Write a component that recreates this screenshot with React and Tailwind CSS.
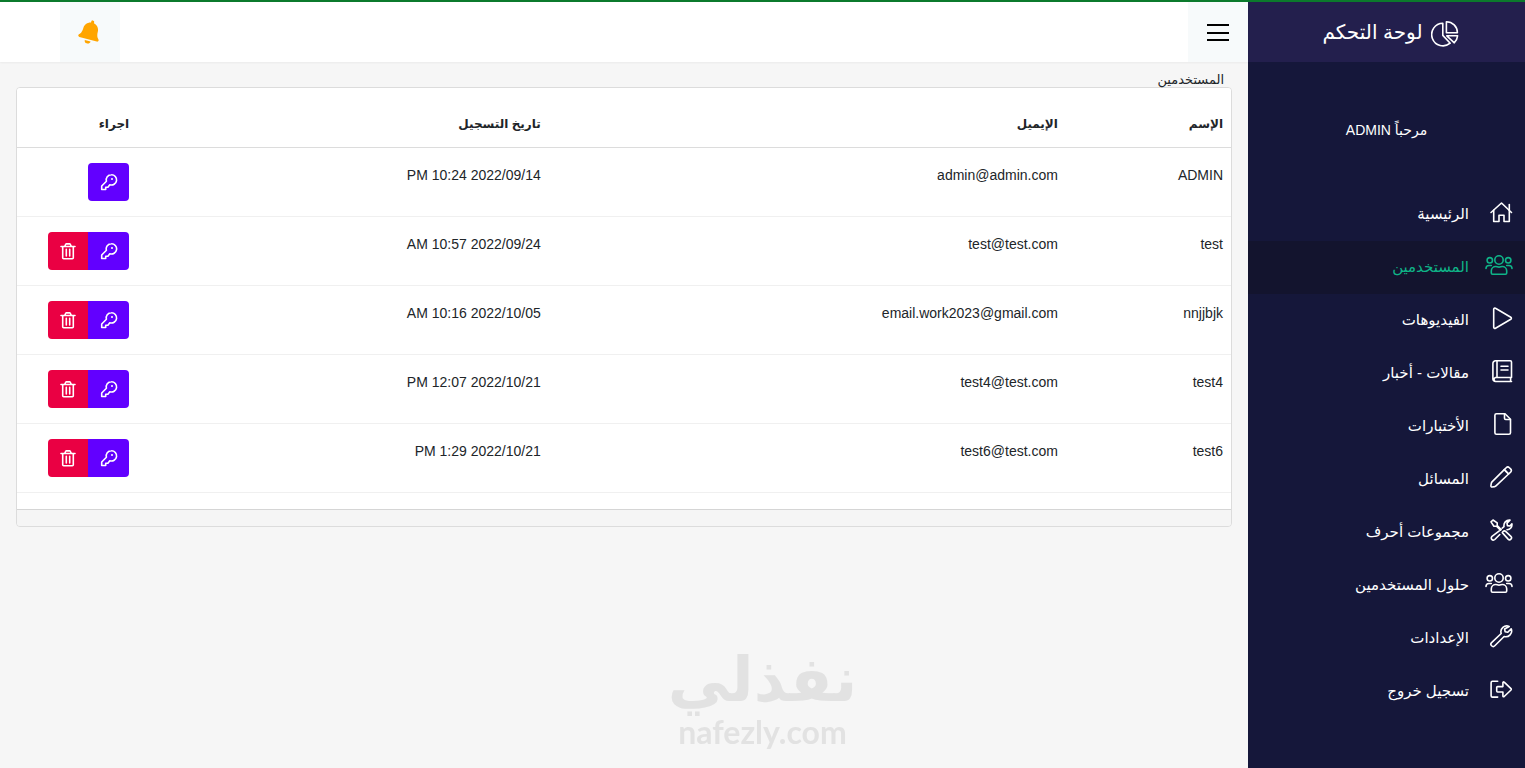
import React, { useState } from 'react';
import { FaBell } from 'react-icons/fa';

const Icon = ({ className = 'size-6', viewBox = '0 0 24 24', children }) => (
    <svg
        className={className}
        viewBox={viewBox}
        fill="none"
        stroke="currentColor"
        strokeWidth="1.6"
        strokeLinecap="round"
        strokeLinejoin="round"
        aria-hidden="true"
    >
        {children}
    </svg>
);

const ChartIcon = () => (
    <Icon className="mt-1 size-7" viewBox="0 0 28 28">
        <path d="M11.800 3.200a11.300 11.300 0 1 0 7.400 20l-7.400-7.800z" />
        <path d="M15.400 1.700v11h11a11 11 0 0 0-11-11z" />
        <path d="M15.800 15.800h10.800a11 11 0 0 1-3.300 7z" />
    </Icon>
);

const HomeIcon = () => (
    <Icon>
        <path d="M2 12.500 12.500 3l10 9.500" />
        <path d="M4.700 10.300v11.200h5.300v-6.200h5v6.200h5.300V10.300" />
        <path d="M20.300 10V4.500" />
    </Icon>
);

const UsersIcon = () => (
    <Icon className="h-6 w-7" viewBox="0 0 28 24">
        <circle cx="14" cy="7" r="4.200" />
        <circle cx="4.800" cy="7.300" r="2.700" />
        <circle cx="23.200" cy="7.300" r="2.700" />
        <path d="M6.300 20v-2.300a4.400 4.400 0 0 1 4.400-4.200c1.300 0 1.800.600 3.300.600s2-.600 3.300-.600a4.400 4.400 0 0 1 4.400 4.200V20c0 .700-.500 1.200-1.200 1.200h-13c-.700 0-1.200-.500-1.200-1.200z" />
        <path d="M1 15.500c0-2 1.200-3 3-3h2.300M27 15.500c0-2-1.200-3-3-3h-2.300" />
    </Icon>
);

const PlayIcon = () => (
    <Icon>
        <path d="M4.700 3.300v17.900c0 1 1 1.500 1.800 1l15.300-9c.8-.5.8-1.500 0-2L6.500 2.300c-.8-.5-1.800 0-1.800 1z" />
    </Icon>
);

const BookIcon = () => (
    <Icon>
        <path d="M22.500 18.500V3c0-.700-.500-1.200-1.200-1.200H6.500A2.600 2.600 0 0 0 3.900 4.400v15.500a2.600 2.600 0 0 0 2.600 2.600h16M21.600 22.400v-3.800M22.500 18.500h-16A2.100 2.100 0 0 0 6.500 22.500M8 1.900v16.500" />
        <path d="M12 7.300h7M12 11h7" />
    </Icon>
);

const FileIcon = () => (
    <Icon>
        <path d="M16 1.700H7.500c-.900 0-1.600.700-1.600 1.600v17.400c0 .900.700 1.600 1.600 1.600h12.400c.900 0 1.600-.700 1.600-1.600V7.200z" />
        <path d="M15.500 1.900v4.400c0 .700.500 1.200 1.200 1.200h4.600" />
    </Icon>
);

const PencilIcon = () => (
    <Icon>
        <path d="M15.300 4.600 3 16.900c-.4.400-.6.900-.7 1.400l-.4 2.400c-.1.900.5 1.400 1.300 1.300l2.400-.4c.5-.1 1-.3 1.400-.7L19.600 9z" />
        <path d="m15.300 4.600 1.900-1.900a2.300 2.300 0 0 1 3.200 0l1.200 1.200a2.300 2.300 0 0 1 0 3.200L19.600 9z" />
    </Icon>
);

const ToolsIcon = () => (
    <Icon>
        <path d="M2 3.900 4 2l4.200 2.900v2.600l4 4M2 3.900l2.900 4.300h2.600l4 4" />
        <path d="m13.300 14.600 5.800 6.500a2 2 0 0 0 2.800 0 2 2 0 0 0 0-2.800l-5-4.700c-1-.9-2.100-.8-2.900-.1-.7.700-.9.900-.7 1.100z" />
        <path d="M10.300 12.900 3 18.400a2.100 2.100 0 0 0-.2 3 2.100 2.100 0 0 0 3 .1l5-5" />
        <path d="m13.200 10.200 1.800-1.500c-.6-3.700 2-6.900 6-6.600l-3 3 .4 2.500 2.500.4 2-2.200c.5 3.400-1.800 6.100-4.900 6" />
    </Icon>
);

const WrenchIcon = () => (
    <Icon>
        <path d="M20.200 2.500a5.800 5.800 0 0 0-8 7L2.600 18.600a2.200 2.200 0 0 0 3.200 3.200l9.300-9.300a5.800 5.800 0 0 0 7.100-7.700l-3.400 3.400-2.700-.5-.5-2.700z" />
    </Icon>
);

const LogoutIcon = () => (
    <Icon>
        <path d="M8.700 4.300H3.500c-.800 0-1.400.600-1.400 1.400v13c0 .800.600 1.400 1.400 1.400h5.200" />
        <path d="M13.900 5.600v4H8.600c-.500 0-.900.400-.900.900v3.600c0 .500.400.900.900.900h5.300v4c0 .700.800 1 1.300.500l6.800-6.500c.4-.4.400-1 0-1.400l-6.800-6.500c-.5-.500-1.300-.2-1.300.5z" />
    </Icon>
);

const KeyIcon = () => (
    <Icon className="size-[18px]" viewBox="0 0 18 18">
        <path d="M11.300 1.800a5.100 5.100 0 0 0-4.900 6.500L1.700 13v3.500h4v-2.200h2.200l1.900-2.600a5.100 5.100 0 1 0 1.500-9.900z" />
        <circle cx="12" cy="6" r="1" fill="currentColor" stroke="none" />
    </Icon>
);

const TrashIcon = () => (
    <Icon className="size-[18px]" viewBox="0 0 18 18">
        <path d="M2 4.500h14M3.700 4.700v11c0 .600.400 1 1 1h8.600c.6 0 1-.4 1-1v-11M5.700 4.300l.9-1.800c.2-.4.500-.6.900-.6h3c.4 0 .7.200.9.600l.9 1.800M7.300 7.300v6.600M10.700 7.300v6.600" />
    </Icon>
);

const menuItems = [
    { label: 'الرئيسية', icon: HomeIcon },
    { label: 'المستخدمين', icon: UsersIcon, active: true },
    { label: 'الفيديوهات', icon: PlayIcon },
    { label: 'مقالات - أخبار', icon: BookIcon },
    { label: 'الأختبارات', icon: FileIcon },
    { label: 'المسائل', icon: PencilIcon },
    { label: 'مجموعات أحرف', icon: ToolsIcon },
    { label: 'حلول المستخدمين', icon: UsersIcon },
    { label: 'الإعدادات', icon: WrenchIcon },
    { label: 'تسجيل خروج', icon: LogoutIcon },
];

const initialUsers = [
    { name: 'ADMIN', email: 'admin@admin.com', date: '2022/09/14 10:24 PM', isAdmin: true },
    { name: 'test', email: 'test@test.com', date: '2022/09/24 10:57 AM' },
    { name: 'nnjjbjk', email: 'email.work2023@gmail.com', date: '2022/10/05 10:16 AM' },
    { name: 'test4', email: 'test4@test.com', date: '2022/10/21 12:07 PM' },
    { name: 'test6', email: 'test6@test.com', date: '2022/10/21 1:29 PM' },
];

const Sidebar = () => (
    <aside className="w-[277px] shrink-0 bg-[#15173a] text-white">
        <div className="flex h-15 items-center justify-center gap-2 bg-[#231f4d] pl-2 text-xl">
            <ChartIcon />
            <span>لوحة التحكم</span>
        </div>
        <p className="pt-14 pb-[46px] text-center text-sm leading-6">مرحباً ADMIN</p>
        <nav>
            {menuItems.map(({ label, icon: ItemIcon, active }) => (
                <a
                    key={label}
                    href="#"
                    className={`flex h-[53px] items-center gap-4 pr-3 text-[15px] ${
                        active ? 'bg-[#13142e] text-[#0fb488]' : 'text-white'
                    }`}
                >
                    <span className="flex w-7 justify-start pb-1.5">
                        <ItemIcon />
                    </span>
                    <span>{label}</span>
                </a>
            ))}
        </nav>
    </aside>
);

const Topbar = ({ onToggle }) => (
    <header className="flex h-15 items-stretch justify-between bg-white pl-15 shadow-xs">
        <button
            type="button"
            aria-label="القائمة"
            onClick={onToggle}
            className="flex w-15 items-center justify-center bg-[#f7fafb] text-black"
        >
            <svg className="size-6" viewBox="0 0 24 24" stroke="currentColor" strokeWidth="2" aria-hidden="true">
                <path d="M1 5h22M1 13h22M1 20h22" />
            </svg>
        </button>
        <button
            type="button"
            aria-label="الإشعارات"
            className="flex w-15 items-center justify-center bg-[#f7fafb] text-[#ffa500]"
        >
            <FaBell className="size-6 rotate-15" />
        </button>
    </header>
);

const UsersTable = ({ users, onDelete }) => (
    <table className="w-full table-fixed text-sm text-[#212529]">
        <thead>
            <tr className="border-b border-[#dcdcdc] text-right text-xs">
                <th className="w-[13.6%] px-2 pt-2 pb-[11px] leading-6">الإسم</th>
                <th className="w-[42.6%] px-2 pt-2 pb-[11px] leading-6">الإيميل</th>
                <th className="w-[33.9%] px-2 pt-2 pb-[11px] leading-6">تاريخ التسجيل</th>
                <th className="w-[9.9%] px-2 pt-2 pb-[11px] leading-6">اجراء</th>
            </tr>
        </thead>
        <tbody>
            {users.map((user) => (
                <tr key={user.email} className="border-b border-[#f0f0f0] align-top leading-6">
                    <td className="px-2 py-[15px]">{user.name}</td>
                    <td className="px-2 py-[15px]">{user.email}</td>
                    <td className="px-2 py-[15px]">{user.date}</td>
                    <td className="px-2 py-[15px]">
                        <div className="flex w-max overflow-hidden rounded-sm text-white">
                            <button
                                type="button"
                                aria-label="تغيير كلمة المرور"
                                className="flex h-[38px] w-[41px] items-center justify-center bg-[#6200ff]"
                            >
                                <KeyIcon />
                            </button>
                            {!user.isAdmin && (
                                <button
                                    type="button"
                                    aria-label="حذف"
                                    onClick={() => onDelete(user.email)}
                                    className="flex h-[38px] w-10 items-center justify-center bg-[#ea0043]"
                                >
                                    <TrashIcon />
                                </button>
                            )}
                        </div>
                    </td>
                </tr>
            ))}
        </tbody>
    </table>
);

const Watermark = () => (
    <div
        aria-hidden="true"
        className="pointer-events-none fixed bottom-5 left-1/2 flex -translate-x-1/2 flex-col items-center font-bold text-[#e2e2e2]"
    >
        <span className="text-[62px] leading-[72px]">نفذلي</span>
        <span className="font-['Lato'] text-[32px] leading-8">nafezly.com</span>
    </div>
);

const App = () => {
    const [users, setUsers] = useState(initialUsers);
    const [sidebarOpen, setSidebarOpen] = useState(true);

    const handleDelete = (email) => {
        setUsers(users.filter((user) => user.email !== email));
    };

    return (
        <div
            dir="rtl"
            className="flex min-h-screen border-t-2 border-[#0b7a2c] bg-[#f6f6f6] font-['Liberation_Sans','DejaVu_Sans',sans-serif]"
        >
            {sidebarOpen && <Sidebar />}
            <div className="min-w-0 flex-1">
                <Topbar onToggle={() => setSidebarOpen(!sidebarOpen)} />
                <main className="px-4 pt-2">
                    <h1 className="h-[17px] px-2 text-[13px] leading-5 text-[#212529]">المستخدمين</h1>
                    <div className="overflow-hidden rounded-sm border border-[#dcdcdc]">
                        <div className="bg-white py-4">
                            <UsersTable users={users} onDelete={handleDelete} />
                        </div>
                        <div className="h-[17px] border-t border-[#d5d5d5] bg-[#f5f5f5]"></div>
                    </div>
                </main>
            </div>
            <Watermark />
        </div>
    );
};

export default App;
